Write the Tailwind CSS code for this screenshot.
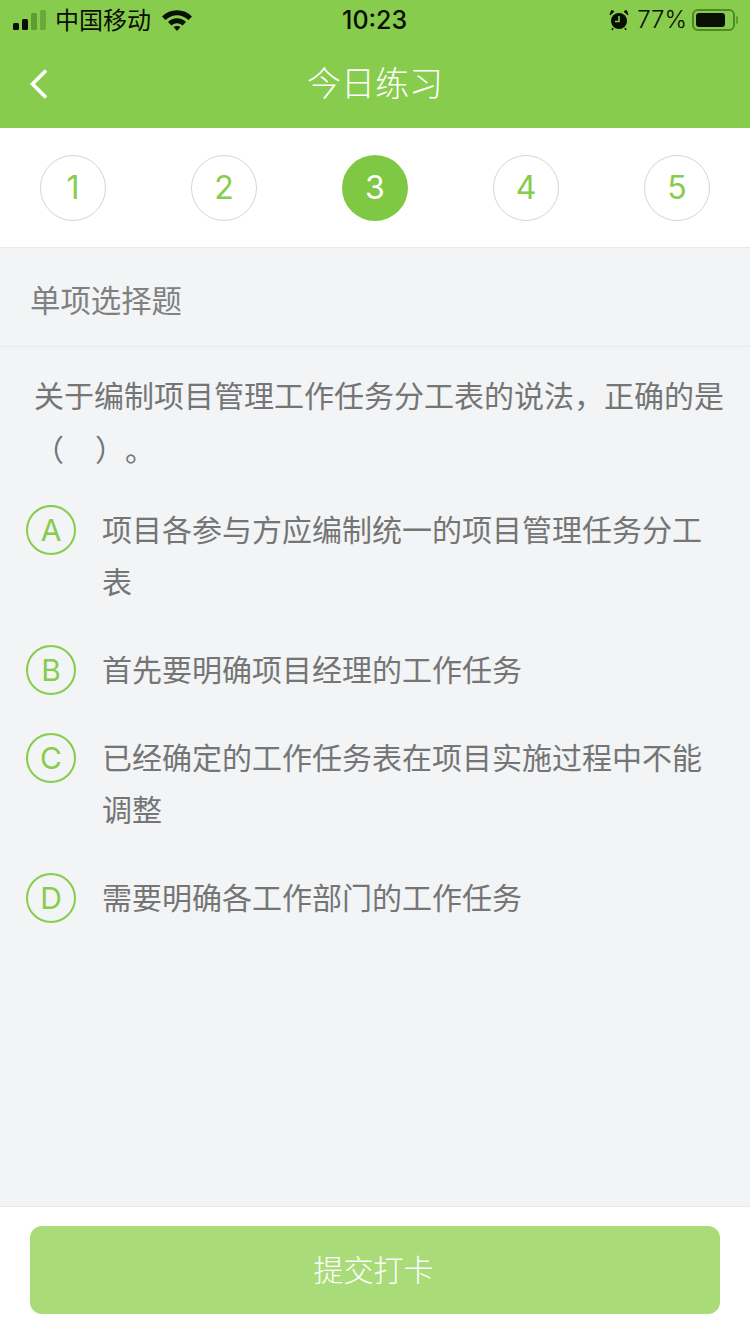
<!DOCTYPE html>
<html lang="zh-CN">
<head>
  <meta charset="UTF-8" />
  <title>今日练习</title>
  <script src="https://cdn.jsdelivr.net/npm/@tailwindcss/browser@4"></script>
</head>
<body class="w-[750px] h-[1334px] overflow-hidden bg-[#f2f4f6] font-['Inter','Noto_Sans_CJK_SC',sans-serif]">
  <div class="flex flex-col h-[1334px]">
    <!-- header -->
    <header class="h-[128px] bg-[#87cc4c] shrink-0">
      <div class="relative h-[40px] flex items-center justify-between pl-[13px] pr-[12px] text-[#0a0f05]">
        <div class="flex items-center">
          <svg width="34" height="22" viewBox="0 0 34 22" class="mr-[8px]">
            <rect x="0" y="14" width="6" height="7" rx="1.500" fill="#0a0f05"/>
            <rect x="9" y="10" width="6" height="11" rx="1.500" fill="#0a0f05"/>
            <rect x="18" y="4" width="6" height="17" rx="1.500" fill="#5f9a33"/>
            <rect x="27" y="1" width="6" height="20" rx="1.500" fill="#6aa83b"/>
          </svg>
          <span class="text-[24px] leading-[40px] w-[96px] whitespace-nowrap mt-[1px]">中国移动</span>
          <svg width="30" height="22" viewBox="0 0 30 22" class="ml-[11px]">
            <path d="M0 7.500C8 -1 22 -1 30 7.500L26.500 11C19.500 4.500 10.500 4.500 3.500 11Z" fill="#0a0f05"/>
            <path d="M6 13C11 8 19 8 24 13L20.500 16.500C17 13.500 13 13.500 9.500 16.500Z" fill="#0a0f05"/>
            <path d="M11.500 18C13.500 16.500 16.500 16.500 18.500 18L15 22Z" fill="#0a0f05"/>
          </svg>
        </div>
        <span class="absolute left-[342px] top-0 text-[25px] leading-[40px] font-medium">10:23</span>
        <div class="flex items-center">
          <svg width="20" height="22" viewBox="0 0 20 22" class="mr-[8px]">
            <circle cx="10" cy="12" r="8" fill="#0a0f05"/>
            <path d="M10 7V12.500H6" stroke="#87cc4c" stroke-width="1.600" fill="none"/>
            <path d="M1 6L5 2.500L2.500 1.500ZM19 6L15 2.500L17.500 1.500Z" fill="#0a0f05" stroke="#0a0f05"/>
            <path d="M4 19L3 21M16 19L17 21" stroke="#0a0f05" stroke-width="1.500"/>
          </svg>
          <span class="text-[24px] leading-[40px] font-light">77%</span>
          <div class="ml-[5px] w-[43px] h-[22px] rounded-[6px] border-2 border-[#4f8a27] p-[2px]">
            <div class="w-[29px] h-full rounded-[3px] bg-[#0a0f05]"></div>
          </div>
          <div class="ml-[1px] w-[2px] h-[8px] rounded-r-sm bg-[#5f9a33]"></div>
        </div>
      </div>
      <div class="relative h-[88px] flex items-center justify-center">
        <svg width="20" height="32" viewBox="0 0 20 32" class="absolute left-[29px] top-[28px]">
          <path d="M17 2.500L3.500 16L17 29.500" stroke="#fff" stroke-width="3.600" fill="none"/>
        </svg>
        <h1 class="text-[34px] leading-[88px] text-white font-light">今日练习</h1>
      </div>
    </header>

    <!-- question numbers -->
    <nav class="h-[120px] shrink-0 bg-white border-b border-[#e8e9ea] flex items-center justify-between px-[40px]">
      <div class="w-[66px] h-[66px] rounded-full border border-[#d5d5d5] flex items-center justify-center text-[32px] text-[#87cc4c]">1</div>
      <div class="w-[66px] h-[66px] rounded-full border border-[#d5d5d5] flex items-center justify-center text-[32px] text-[#87cc4c]">2</div>
      <div class="w-[66px] h-[66px] rounded-full bg-[#7fc843] flex items-center justify-center text-[32px] text-white">3</div>
      <div class="w-[66px] h-[66px] rounded-full border border-[#d5d5d5] flex items-center justify-center text-[32px] text-[#87cc4c]">4</div>
      <div class="w-[66px] h-[66px] rounded-full border border-[#d5d5d5] flex items-center justify-center text-[32px] text-[#87cc4c]">5</div>
    </nav>

    <!-- question -->
    <main class="flex-1 min-h-0">
      <div class="h-[99px] border-b border-[#e8e9ea] pl-[30px] pt-[10px] flex items-center text-[30.400px] text-[#808080]">单项选择题</div>
      <p class="mt-[22px] pl-[34px] pr-[26px] text-[30px] leading-[54px] text-[#757575] [text-spacing-trim:space-all]">关于编制项目管理工作任务分工表的说法，正确的是（<span class="inline-block w-[31px]"></span>）。</p>

      <ul class="mt-[27px] pl-[26px] pr-[46px] flex flex-col gap-[36px]">
        <li class="flex items-start">
          <span class="w-[50px] h-[50px] mt-[1px] shrink-0 rounded-full border-2 border-[#87cc4c] flex items-center justify-center text-[30px] text-[#87cc4c]">A</span>
          <span class="ml-[27px] -translate-x-px text-[30px] leading-[52px] text-[#757575]">项目各参与方应编制统一的项目管理任务分工表</span>
        </li>
        <li class="flex items-start">
          <span class="w-[50px] h-[50px] mt-[1px] shrink-0 rounded-full border-2 border-[#87cc4c] flex items-center justify-center text-[30px] text-[#87cc4c]">B</span>
          <span class="ml-[27px] -translate-x-px text-[30px] leading-[52px] text-[#757575]">首先要明确项目经理的工作任务</span>
        </li>
        <li class="flex items-start">
          <span class="w-[50px] h-[50px] mt-[1px] shrink-0 rounded-full border-2 border-[#87cc4c] flex items-center justify-center text-[30px] text-[#87cc4c]">C</span>
          <span class="ml-[27px] -translate-x-px text-[30px] leading-[52px] text-[#757575]">已经确定的工作任务表在项目实施过程中不能调整</span>
        </li>
        <li class="flex items-start">
          <span class="w-[50px] h-[50px] mt-[1px] shrink-0 rounded-full border-2 border-[#87cc4c] flex items-center justify-center text-[30px] text-[#87cc4c]">D</span>
          <span class="ml-[27px] -translate-x-px text-[30px] leading-[52px] text-[#757575]">需要明确各工作部门的工作任务</span>
        </li>
      </ul>
    </main>

    <!-- submit -->
    <footer class="h-[128px] shrink-0 bg-white border-t border-[#e8e9ee] pt-[19px] px-[30px]">
      <button class="w-full h-[88px] rounded-[12px] bg-[#a9dc79] text-[30px] font-light text-white pr-[3px]">提交打卡</button>
    </footer>
  </div>
</body>
</html>
